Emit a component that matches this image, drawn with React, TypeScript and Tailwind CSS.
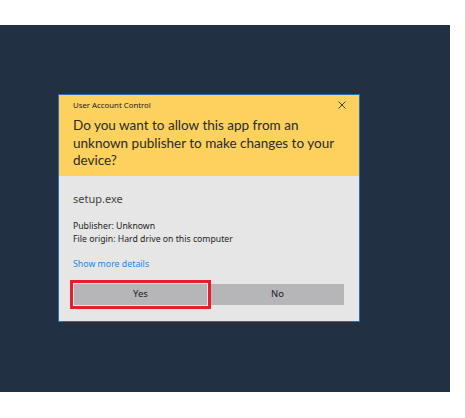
export default function App() {
  return (
    <div className="h-[418px] w-[465px] bg-white pt-[25px]" style={{ fontFamily: '"Noto Sans", "Open Sans", sans-serif' }}>
      <div className="h-[367px] w-[450px] bg-[#223043] pl-[58px] pt-[69px]">
        {/* UAC dialog */}
        <div className="w-[302px] border border-[#2a6fb0] bg-[#e6e6e6]">
          <div className="bg-[#fdd15d] px-[14px] pb-[6px] pt-[1px] text-[#222]">
            <div className="flex items-center justify-between">
              <span className="text-[7.8px] leading-[18px]">User Account Control</span>
              <svg width="8" height="8" viewBox="0 0 8 8" className="mr-[-1px]">
                <path d="M0.5 0.5 L7.5 7.5 M7.5 0.5 L0.5 7.5" stroke="#444" strokeWidth="1" />
              </svg>
            </div>
            <p className="mt-[3px] text-[13.5px] leading-[17.5px] text-[#2a2a2a]" style={{ fontFamily: 'Lato, "Noto Sans", sans-serif' }}>
              Do you want to allow this app from an unknown publisher to make changes to your device?
            </p>
          </div>
          <div className="px-[14px] pb-[16px] pt-[14px]">
            <p className="text-[11px] leading-[18px] text-[#444]">setup.exe</p>
            <div className="mt-[12px] text-[8.7px] leading-[13px] text-[#222]">
              <p>Publisher: Unknown</p>
              <p>File origin: Hard drive on this computer</p>
            </div>
            <p className="mt-[12px] text-[8.8px] leading-[13px] text-[#1a86e0]">Show more details</p>
            <div className="mt-[13px] flex gap-[4px] pl-[1px] pr-[1px]">
              <div className="relative flex-1">
                <div className="flex h-[21px] items-center justify-center bg-[#b6b5b7] text-[9.5px] text-[#222]">Yes</div>
                <div className="absolute -inset-[4px] border-[3px] border-[#ea1d2c]" />
              </div>
              <div className="flex h-[21px] flex-1 items-center justify-center bg-[#b6b5b7] text-[9.5px] text-[#222]">No</div>
            </div>
          </div>
        </div>
      </div>
    </div>
  );
}
